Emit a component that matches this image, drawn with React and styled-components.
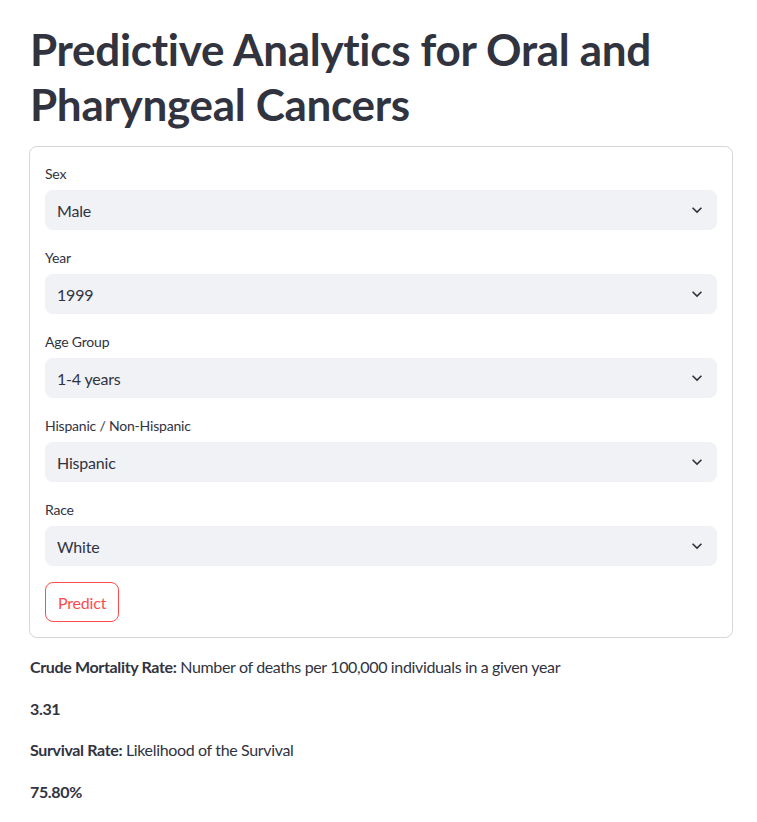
import React from "react";
import styled, { createGlobalStyle } from "styled-components";

const GlobalStyle = createGlobalStyle`
	body {
		margin: 0;
		background: #ffffff;
		font-family: "Lato", "Noto Sans", sans-serif;
		color: rgb(49, 51, 63);
	}
`;

const Page = styled.main`
	padding: 22px 24px 24px 29px;
	max-width: 704px;
`;

const Title = styled.h1`
	margin: 0 0 14px;
	padding-left: 1px;
	font-size: 44px;
	line-height: 55px;
	font-weight: 700;
	letter-spacing: -0.3px;
	color: rgb(49, 51, 63);
`;

const Form = styled.form`
	border: 1px solid rgba(49, 51, 63, 0.2);
	border-radius: 8px;
	padding: 15px;
	display: flex;
	flex-direction: column;
	gap: 16px;
`;

const Field = styled.div`
	display: flex;
	flex-direction: column;
`;

const Label = styled.label`
	font-size: 14px;
	line-height: 24px;
	margin-bottom: 4px;
	letter-spacing: -0.2px;
`;

const SelectBox = styled.div`
	height: 40px;
	background: rgb(240, 242, 246);
	border-radius: 8px;
	display: flex;
	align-items: center;
	justify-content: space-between;
	padding: 0 10px 0 12px;
	font-size: 16px;
	letter-spacing: -0.2px;
	cursor: pointer;
`;

const Chevron = () => (
	<svg width="20" height="20" viewBox="0 0 24 24" fill="rgb(49,51,63)">
		<path d="M7.41 8.59 12 13.17l4.59-4.58L18 10l-6 6-6-6 1.41-1.41z" />
	</svg>
);

const PredictButton = styled.button`
	align-self: flex-start;
	height: 40px;
	padding: 0 12px;
	border: 1px solid rgb(255, 75, 75);
	border-radius: 8px;
	background: #ffffff;
	color: rgb(255, 75, 75);
	font-family: inherit;
	font-size: 16px;
	letter-spacing: -0.2px;
	cursor: pointer;
`;

const Text = styled.p`
	margin: 16px 0 0;
	padding-left: 1px;
	font-size: 16px;
	line-height: 25.6px;
	letter-spacing: -0.35px;
	b {
		font-weight: 700;
	}
`;

const fields = [
	{ label: "Sex", value: "Male" },
	{ label: "Year", value: "1999" },
	{ label: "Age Group", value: "1-4 years" },
	{ label: "Hispanic / Non-Hispanic", value: "Hispanic" },
	{ label: "Race", value: "White" },
];

const App = () => {
	return (
		<Page>
			<GlobalStyle />
			<Title>Predictive Analytics for Oral and Pharyngeal Cancers</Title>
			<Form onSubmit={(e) => e.preventDefault()}>
				{fields.map((f) => (
					<Field key={f.label}>
						<Label>{f.label}</Label>
						<SelectBox>
							<span>{f.value}</span>
							<Chevron />
						</SelectBox>
					</Field>
				))}
				<PredictButton type="submit">Predict</PredictButton>
			</Form>
			<Text>
				<b>Crude Mortality Rate:</b> Number of deaths per 100,000 individuals in a
				given year
			</Text>
			<Text>
				<b>3.31</b>
			</Text>
			<Text>
				<b>Survival Rate:</b> Likelihood of the Survival
			</Text>
			<Text>
				<b>75.80%</b>
			</Text>
		</Page>
	);
};

export default App;
